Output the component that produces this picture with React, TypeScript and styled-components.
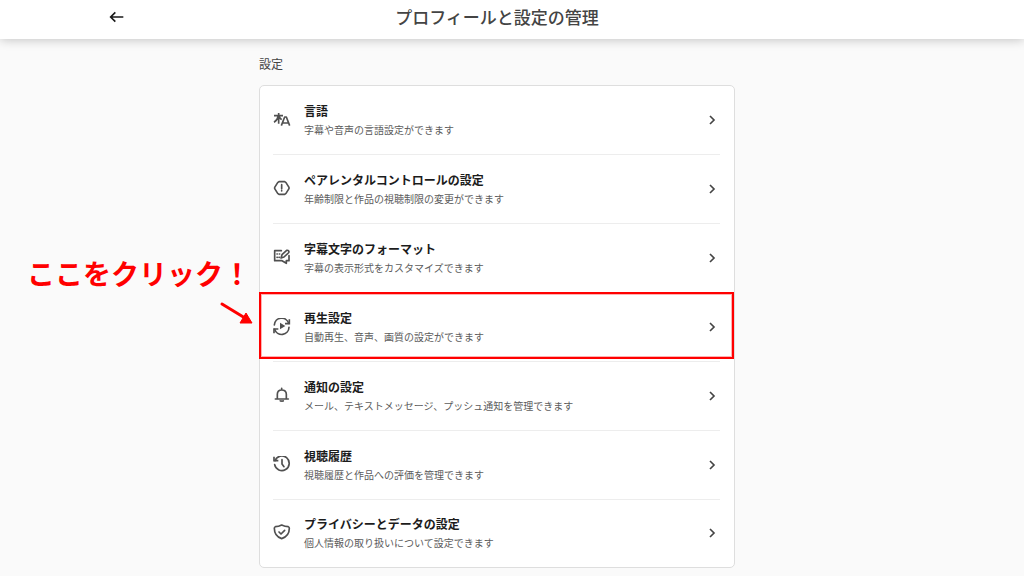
import React from "react";
import styled, { createGlobalStyle } from "styled-components";

const GlobalStyle = createGlobalStyle`
  *, *::before, *::after { box-sizing: border-box; }
  body {
    margin: 0;
    background: #fafafa;
    color: #1c1c1c;
    font-family: "Noto Sans CJK JP", "Noto Sans", sans-serif;
  }
`;

const Header = styled.header`
  position: relative;
  display: flex;
  justify-content: center;
  padding-right: 30px;
  background: #fff;
  box-shadow: 0 1px 10px rgba(0, 0, 0, 0.22);
`;

const HeaderInner = styled.div`
  display: grid;
  grid-template-columns: 16px 1fr 16px;
  align-items: center;
  width: 100%;
  max-width: 776px;
  padding-bottom: 6px;
`;

const BackButton = styled.button`
  display: flex;
  padding: 0;
  border: 0;
  background: none;
  color: #1a1a1a;
  cursor: pointer;
`;

const PageTitle = styled.h1`
  margin: 0;
  font-size: 17px;
  line-height: 33px;
  font-weight: 500;
  text-align: center;
  color: #444;
`;

const Main = styled.main`
  display: flex;
  justify-content: center;
  padding: 15px 30px 7px 0;
`;

const Section = styled.section`
  width: 100%;
  max-width: 476px;
`;

const SectionTitle = styled.h2`
  margin: 0 0 11px;
  font-size: 12px;
  line-height: 20px;
  font-weight: 400;
  color: #444;
`;

const Card = styled.ul`
  margin: 0;
  padding: 0 14px 0 13px;
  list-style: none;
  background: #fff;
  border: 1px solid #dedede;
  border-radius: 5px;
`;

const Item = styled.li`
  position: relative;
  & + & {
    border-top: 1px solid #ededed;
  }
`;

const ItemLink = styled.a`
  display: flex;
  align-items: center;
  gap: 13px;
  padding: 15px 2px 15px 0;
  color: inherit;
  text-decoration: none;

  ${Item}:last-child > & {
    padding: 14px 2px 15px 0;
  }
`;

const ItemText = styled.span`
  display: flex;
  flex: 1;
  flex-direction: column;
`;

const ItemTitle = styled.span`
  font-size: 12px;
  line-height: 20px;
  font-weight: 700;
`;

const ItemDescription = styled.span`
  font-size: 10px;
  line-height: 18px;
  color: #5c5c5c;
`;

const Icon = styled.svg`
  flex: none;
  width: 18px;
  height: 18px;
  fill: none;
  stroke: #505050;
  stroke-width: 5;
  stroke-linecap: round;
  stroke-linejoin: round;
`;

const Highlight = styled.span`
  position: absolute;
  inset: -1px -14px 2px -14px;
  border: 2px solid #ff0000;
  outline: 1px solid rgba(255, 0, 0, 0.3);
  outline-offset: -3px;
  pointer-events: none;
`;

const Callout = styled.div`
  position: absolute;
  right: 100%;
  top: -40px;
  display: flex;
  flex-direction: column;
  align-items: flex-end;
  padding-right: 20px;
  pointer-events: none;
`;

const CalloutText = styled.p`
  margin: 0;
  padding-right: 2px;
  font-size: 28px;
  line-height: 40px;
  font-weight: 700;
  white-space: nowrap;
  color: #ff0000;
`;

const CalloutArrow = styled.svg`
  width: 34px;
  height: 24px;
  margin-top: 8px;
`;

const iconPaths: Record<string, React.ReactNode> = {
  language: (
    <g strokeLinecap="butt">
      <path d="M3 14H30M17 6V38M16 15Q13 28 3 34M18 15Q20 22 26 26" />
      <path d="M25 44L35 18H40L50 44M30 36H45" />
    </g>
  ),
  parental: (
    <>
      <path d="M18 5H35L39 8L48 22V26L39 40L35 43H18L14 40L5 26V22L14 8Z" />
      <path d="M26 14V26M26 32V33" />
    </>
  ),
  subtitles: (
    <>
      <path d="M25 5H5V35H27L40 43V35H48V20" />
      <path d="M24 27L27 17L41 4Q45 3 47 6Q49 9 46 12L33 24Z" />
      <path d="M12 15H13M19 15H20M12 25H13M18 25H19" />
    </>
  ),
  playback: (
    <>
      <path d="M4 21A22 22 0 0 1 47 16M48 28A22 22 0 0 1 5 34" />
      <path d="M49 4V17H36M3 46V33H16" strokeLinecap="butt" strokeLinejoin="miter" />
      <path d="M21 14V34L37 24Z" fill="#505050" stroke="none" />
    </>
  ),
  notification: (
    <>
      <path d="M7 36H46M13 36V22C13 13 19 9 26 9S40 13 40 22V36M26 4V8" />
      <path d="M21 42Q26 45 32 42Z" fill="#505050" strokeWidth="3" />
    </>
  ),
  history: (
    <>
      <path d="M6 14A22 22 0 1 1 5 26" />
      <path d="M3 2V14H16" strokeLinecap="butt" strokeLinejoin="miter" />
      <path d="M27 11V24L33 32" />
    </>
  ),
  privacy: (
    <>
      <path d="M26 3Q36 8 46 8Q49 9 49 13C49 30 42 39 26 44C10 39 4 30 4 13Q4 9 7 8Q17 8 26 3Z" />
      <path d="M18 24L24 30L35 19" />
    </>
  ),
};

const settings = [
  { icon: "language", title: "言語", description: "字幕や音声の言語設定ができます" },
  { icon: "parental", title: "ペアレンタルコントロールの設定", description: "年齢制限と作品の視聴制限の変更ができます" },
  { icon: "subtitles", title: "字幕文字のフォーマット", description: "字幕の表示形式をカスタマイズできます" },
  { icon: "playback", title: "再生設定", description: "自動再生、音声、画質の設定ができます", callout: "ここをクリック！" },
  { icon: "notification", title: "通知の設定", description: "メール、テキストメッセージ、プッシュ通知を管理できます" },
  { icon: "history", title: "視聴履歴", description: "視聴履歴と作品への評価を管理できます" },
  { icon: "privacy", title: "プライバシーとデータの設定", description: "個人情報の取り扱いについて設定できます" },
];

export default function App() {
  return (
    <>
      <GlobalStyle />
      <Header>
        <HeaderInner>
          <BackButton type="button" aria-label="戻る">
            <svg width="16" height="16" viewBox="0 0 48 48" fill="none" stroke="currentColor" strokeWidth="5">
              <path d="M5 24H43M19 10L5 24L19 38" />
            </svg>
          </BackButton>
          <PageTitle>プロフィールと設定の管理</PageTitle>
        </HeaderInner>
      </Header>
      <Main>
        <Section>
          <SectionTitle>設定</SectionTitle>
          <Card>
            {settings.map((item) => (
              <Item key={item.icon}>
                <ItemLink href={`#${item.icon}`}>
                  <Icon viewBox="0 0 54 54" aria-hidden="true">
                    {iconPaths[item.icon]}
                  </Icon>
                  <ItemText>
                    <ItemTitle>{item.title}</ItemTitle>
                    <ItemDescription>{item.description}</ItemDescription>
                  </ItemText>
                  <svg width="12" height="12" viewBox="0 0 36 36" fill="none" stroke="#444" strokeWidth="5" aria-hidden="true">
                    <path d="M12 6L24 18L12 30" />
                  </svg>
                </ItemLink>
                {item.callout && (
                  <>
                    <Highlight />
                    <Callout>
                      <CalloutText>{item.callout}</CalloutText>
                      <CalloutArrow viewBox="0 0 34 24" aria-hidden="true">
                        <path d="M3 3L26 17" stroke="#ff0000" strokeWidth="3" strokeLinecap="round" />
                        <path d="M27 12L33 22L21 22Z" fill="#ff0000" stroke="#ff0000" strokeLinejoin="round" />
                      </CalloutArrow>
                    </Callout>
                  </>
                )}
              </Item>
            ))}
          </Card>
        </Section>
      </Main>
    </>
  );
}
